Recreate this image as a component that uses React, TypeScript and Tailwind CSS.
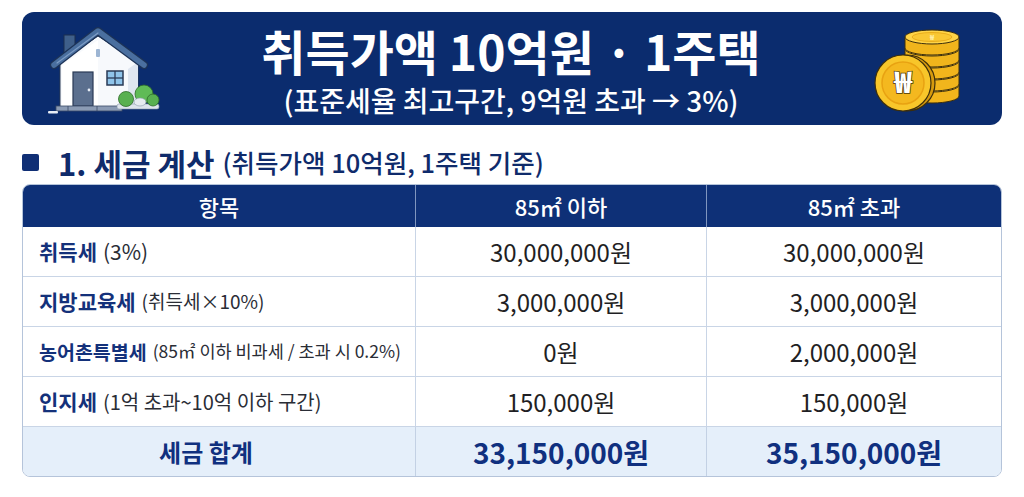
import React from "react";

const FONT = { fontFamily: '"Noto Sans CJK KR", "Noto Sans", sans-serif' };

const HouseIcon = () => (
  <svg viewBox="44 20 120 100" className="w-[120px] h-[100px] shrink-0">
    {/* chimney */}
    <rect x="64" y="36" width="11" height="18" fill="#3f5f8a" stroke="#1c2f4f" strokeWidth="1" />
    {/* walls */}
    <path d="M60 63 L98 37 L138 63 L138 108 L60 108 Z" fill="#f7f9fc" stroke="#2a3a55" strokeWidth="1" />
    <path d="M62 66 L98 41 L98 108 L62 108 Z" fill="#ffffff" />
    <path d="M128 70 L138 63 L138 108 L128 108 Z" fill="#dfe6f0" />
    {/* roof */}
    <path d="M54 66 L98 32 L144 66" fill="none" stroke="#1d3357" strokeWidth="8" strokeLinecap="round" strokeLinejoin="round" />
    <path d="M54 66 L98 32 L144 66" fill="none" stroke="#4a6f9f" strokeWidth="5.5" strokeLinecap="round" strokeLinejoin="round" />
    <path d="M57 64 L98 34" fill="none" stroke="#7d9cc4" strokeWidth="1.2" strokeLinecap="round" />
    {/* vent */}
    <rect x="96" y="50" width="4" height="8" rx="1" fill="#9db5d3" />
    {/* door */}
    <rect x="73" y="73" width="20" height="34" fill="#5b6f8e" stroke="#2a3a55" strokeWidth="1.2" />
    <circle cx="89" cy="91" r="1.4" fill="#e8eef6" />
    {/* window */}
    <rect x="107" y="72" width="16" height="14" fill="#8fc4ea" stroke="#2a3a55" strokeWidth="1.5" />
    <line x1="115" y1="72" x2="115" y2="86" stroke="#2a3a55" strokeWidth="1.3" />
    <line x1="107" y1="79" x2="123" y2="79" stroke="#2a3a55" strokeWidth="1.3" />
    {/* base step */}
    <rect x="56" y="107" width="66" height="5" fill="#8b9bb4" stroke="#3a4a66" strokeWidth="0.8" />
    <line x1="68" y1="107" x2="68" y2="112" stroke="#3a4a66" strokeWidth="0.8" />
    <line x1="97" y1="107" x2="97" y2="112" stroke="#3a4a66" strokeWidth="0.8" />
    {/* bush */}
    <rect x="117" y="105" width="42" height="5" rx="2" fill="#dde4ec" stroke="#8a98aa" strokeWidth="0.6" />
    <circle cx="126" cy="100" r="7.5" fill="#58b050" stroke="#2f6b2a" strokeWidth="0.8" />
    <circle cx="144" cy="95" r="9" fill="#5fbb56" stroke="#2f6b2a" strokeWidth="0.8" />
    <circle cx="153" cy="101" r="6" fill="#58b050" stroke="#2f6b2a" strokeWidth="0.8" />
    <ellipse cx="140" cy="103" rx="6" ry="4" fill="#e6ebf0" stroke="#8a98aa" strokeWidth="0.6" />
    <rect x="48" y="112" width="10" height="2.5" rx="1" fill="#e8edf5" />
  </svg>
);

const CoinsIcon = () => {
  const cx = 932;
  const tops = [90, 78, 66, 54, 42];
  return (
    <svg viewBox="866 28 100 92" className="w-[100px] h-[92px] shrink-0">
      {tops.map((y) => (
        <g key={y}>
          <path
            d={`M${cx - 27} ${y} L${cx - 27} ${y + 11} A27 7 0 0 0 ${cx + 27} ${y + 11} L${cx + 27} ${y} Z`}
            fill="#f1b51c"
            stroke="#3d2f0c"
            strokeWidth="1"
          />
          <ellipse cx={cx} cy={y} rx="27" ry="7" fill="#ffd447" stroke="#3d2f0c" strokeWidth="1" />
        </g>
      ))}
      <ellipse cx={cx} cy="42" rx="20" ry="4.5" fill="#f9c733" stroke="#e3a514" strokeWidth="0.8" />
      <text x={cx} y="45" textAnchor="middle" fontSize="7" fill="#fff1b0" fontWeight="700">₩</text>
      {/* front coin */}
      <circle cx="907" cy="88" r="28" fill="#d69a0e" stroke="#3d2f0c" strokeWidth="1.2" />
      <circle cx="903" cy="88" r="28" fill="#f8c62a" stroke="#3d2f0c" strokeWidth="1.2" />
      <circle cx="903" cy="88" r="21" fill="#f4b81f" stroke="#e8a212" strokeWidth="1.5" />
      <text
        x="903"
        y="98"
        textAnchor="middle"
        fontSize="29"
        fontWeight="800"
        fill="#ffffff"
        stroke="#4a3608"
        strokeWidth="1.5"
        paintOrder="stroke"
        style={FONT}
      >
        ₩
      </text>
    </svg>
  );
};

type Row = {
  title: string;
  titleSize: string;
  note: string;
  noteSize: string;
  small: string;
  large: string;
};

const rows: Row[] = [
  { title: "취득세", titleSize: "text-[21px]", note: "(3%)", noteSize: "text-[21px]", small: "30,000,000원", large: "30,000,000원" },
  { title: "지방교육세", titleSize: "text-[21px]", note: "(취득세×10%)", noteSize: "text-[19px]", small: "3,000,000원", large: "3,000,000원" },
  { title: "농어촌특별세", titleSize: "text-[19.5px]", note: "(85㎡ 이하 비과세 / 초과 시 0.2%)", noteSize: "text-[17.5px]", small: "0원", large: "2,000,000원" },
  { title: "인지세", titleSize: "text-[21px]", note: "(1억 초과~10억 이하 구간)", noteSize: "text-[20px]", small: "150,000원", large: "150,000원" },
];

export default function App() {
  return (
    <div className="w-[1024px] h-[497px] bg-white px-[22px] pt-[12px]" style={FONT}>
      <header className="h-[113px] rounded-[12px] bg-[#0b2c6e] flex items-center">
        <div className="ml-[22px]">
          <HouseIcon />
        </div>
        <div className="flex-1 h-full flex flex-col items-center pt-[16px] pr-[8px] text-white">
          <h1 className="text-[48px] font-bold leading-[44px]">취득가액 10억원 · 1주택</h1>
          <p className="text-[28px] font-medium leading-[30px] mt-[13px]">(표준세율 최고구간, 9억원 초과 → 3%)</p>
        </div>
        <div className="mr-[36px]">
          <CoinsIcon />
        </div>
      </header>

      <div className="mt-[23px] h-[28px] flex items-center text-[#0f2b6b]">
        <span className="w-[17px] h-[17px] rounded-[2px] bg-[#102f75]" />
        <h2 className="ml-[19px] text-[31px] font-bold leading-none">1. 세금 계산</h2>
        <span className="ml-[8px] text-[25.5px] font-medium leading-none">(취득가액 10억원, 1주택 기준)</span>
      </div>

      <section className="mt-[8px] rounded-[8px] border border-[#b5c4da] overflow-hidden">
        <div className="grid grid-cols-[393px_291px_1fr] h-[42px] bg-[#0e3077] text-white text-[22px] font-medium">
          <div className="flex items-center justify-center border-r border-[#7f95bf]">항목</div>
          <div className="flex items-center justify-center border-r border-[#7f95bf]">85㎡ 이하</div>
          <div className="flex items-center justify-center">85㎡ 초과</div>
        </div>
        {rows.map((r) => (
          <div key={r.title} className="grid grid-cols-[393px_291px_1fr] h-[50px] border-b border-[#c9d5e6] text-[24px] text-[#1f1f24]">
            <div className="flex items-center pl-[16px] gap-[6px] whitespace-nowrap border-r border-[#c9d5e6]">
              <span className={`${r.titleSize} font-bold text-[#14317a]`}>{r.title}</span>
              <span className={`${r.noteSize} text-[#2a2d36]`}>{r.note}</span>
            </div>
            <div className="flex items-center justify-center border-r border-[#c9d5e6]">{r.small}</div>
            <div className="flex items-center justify-center">{r.large}</div>
          </div>
        ))}
        <div className="grid grid-cols-[393px_291px_1fr] h-[49px] bg-[#e5effa] text-[#10307f]">
          <div className="flex items-center justify-center pr-[26px] border-r border-[#c3d1e4] text-[24px] font-bold">세금 합계</div>
          <div className="flex items-center justify-center border-r border-[#c3d1e4] text-[28px] font-bold">33,150,000원</div>
          <div className="flex items-center justify-center text-[28px] font-bold">35,150,000원</div>
        </div>
      </section>
    </div>
  );
}
